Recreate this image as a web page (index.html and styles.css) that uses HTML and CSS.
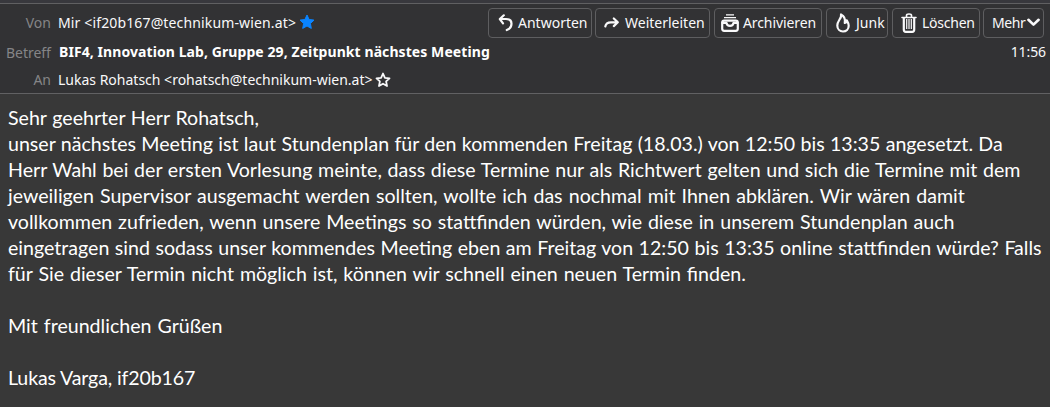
FILE: index.html
```html
<!DOCTYPE html>
<html lang="de">
<head>
<meta charset="utf-8">
<title>Nachricht</title>
<link rel="stylesheet" href="styles.css">
</head>
<body>
<header class="header">
  <div class="top-edge"></div>
  <div class="row row-from">
    <span class="label">Von</span>
    <span class="value from">Mir &lt;if20b167@technikum-wien.at&gt;</span>
    <svg class="star" viewBox="0 0 16 16"><path d="M8 1l2.100 4.500 4.900.6-3.600 3.400.9 4.900L8 12l-4.300 2.400.9-4.900L1 6.100l4.900-.6z" fill="#0a84ff" stroke="#0a84ff" stroke-linejoin="round"/></svg>
    <nav class="actions">
      <button class="btn reply"><svg viewBox="0 0 16 18"><path d="M5.800 1.300L1.800 5L5 9.300M2 5H8C11.500 5 13.500 6.900 13.500 9.700C13.500 12.600 11.800 14.900 8.800 16" class="s"/></svg><span>Antworten</span></button>
      <button class="btn forward"><svg viewBox="0 0 16 18"><path d="M1.300 12.500C1.800 9.500 4 8.300 7 8.300H13.500M9.800 4.500L13.800 8.300L9.800 12.100" class="s"/></svg><span>Weiterleiten</span></button>
      <button class="btn archive"><svg viewBox="0 0 18 18"><path d="M5 .8H13M3 3.600H15" class="thin"/><rect x="1.200" y="6.600" width="15.600" height="10.200" rx="2" class="s"/><path d="M1.500 8.800H5.500C6 12.800 12 12.800 12.500 8.800H16.500" class="s"/></svg><span>Archivieren</span></button>
      <button class="btn junk"><svg viewBox="0 0 14 20"><path d="M5 1.500C6.200 5 1.300 7.500 1.300 12.500C1.300 16 3.800 18.500 7 18.500S12.700 16.200 12.700 12.800C12.700 10.500 11.800 9 10.800 7.300C10.800 8.800 10 9.800 8.800 10C9.500 6.500 8 3 5 1.500Z" class="flame"/><path d="M7 11C6.800 13 4.900 14 4.900 16.200C5.500 17 8.500 17 9.200 16.200C9.200 14 7.200 13.500 7 11Z" fill="#323234"/></svg><span>Junk</span></button>
      <button class="btn delete"><svg viewBox="0 0 16 20"><path d="M1 4.500H15M5.500 4V2.500Q5.500 1 8 1T10.500 2.500V4" class="bin-lid"/><path d="M2.800 5V16.800Q2.800 18.800 4.800 18.800H11.200Q13.200 18.800 13.200 16.800V5" class="s"/><path d="M5.700 6V16M8 6V16M10.300 6V16" class="thin"/></svg><span>Löschen</span></button>
      <button class="btn more"><span>Mehr</span><svg viewBox="0 0 12 8"><path d="M1.300 1.500L6 6L10.700 1.500" class="chev"/></svg></button>
    </nav>
  </div>
  <div class="row row-subject">
    <span class="label">Betreff</span>
    <span class="value subject">BIF4, Innovation Lab, Gruppe 29, Zeitpunkt nächstes Meeting</span>
    <time class="time">11:56</time>
  </div>
  <div class="row row-to">
    <span class="label">An</span>
    <span class="value to">Lukas Rohatsch &lt;rohatsch@technikum-wien.at&gt;</span>
    <svg class="star" viewBox="0 0 16 16"><path d="M8 1.500l1.900 4.300 4.600.5-3.400 3.100.9 4.600L8 11.700l-4 2.300.9-4.600L1.500 6.300l4.600-.5z" class="star-line"/></svg>
  </div>
</header>
<main class="body">
  <div class="line l1">Sehr geehrter Herr Rohatsch,</div>
  <div class="line l2">unser nächstes Meeting ist laut Stundenplan für den kommenden Freitag (18.03.) von 12:50 bis 13:35 angesetzt. Da</div>
  <div class="line l3">Herr Wahl bei der ersten Vorlesung meinte, dass diese Termine nur als Richtwert gelten und sich die Termine mit dem</div>
  <div class="line l4">jeweiligen Supervisor ausgemacht werden sollten, wollte ich das nochmal mit Ihnen abklären. Wir wären damit</div>
  <div class="line l5">vollkommen zufrieden, wenn unsere Meetings so stattfinden würden, wie diese in unserem Stundenplan auch</div>
  <div class="line l6">eingetragen sind sodass unser kommendes Meeting eben am Freitag von 12:50 bis 13:35 online stattfinden würde? Falls</div>
  <div class="line l7">für Sie dieser Termin nicht möglich ist, können wir schnell einen neuen Termin finden.</div>
  <div class="line"></div>
  <div class="line l8">Mit freundlichen Grüßen</div>
  <div class="line"></div>
  <div class="line l9">Lukas Varga, if20b167</div>
</main>
</body>
</html>
```
FILE: styles.css
```css
* { box-sizing: border-box; }
body {
  margin: 0;
  height: 407px;
  overflow: hidden;
  background: #383838;
  color: #f9f9fa;
  font-family: "Noto Sans", sans-serif;
  font-size: 14px;
}
.header {
  height: 94px;
  background: #323234;
  border-bottom: 1px solid #616163;
}
.top-edge { height: 4px; background: #38383d; border-bottom: 1px solid #606062; }
.row { display: flex; align-items: center; white-space: nowrap; }
.row-from { height: 37px; }
.row-subject { height: 22px; }
.row-to { height: 30px; padding-top: 3px; }
.label { width: 51px; margin-right: 7px; text-align: right; color: #858587; }
.from { letter-spacing: 0.14px; }
.subject { margin-left: 1px; padding-bottom: 1px; font-weight: 700; color: #fff; letter-spacing: 0.08px; }
.star { width: 16px; height: 16px; margin-left: 3px; }
.row-from .star { margin-bottom: 2px; }
.actions { display: flex; gap: 4px; margin-left: auto; margin-right: 6px; }
.btn {
  display: flex;
  align-items: center;
  height: 30px;
  padding: 0;
  border: 1px solid #5e5e60;
  border-radius: 4px;
  background: #323234;
  color: #f9f9fa;
  font: inherit;
}
.btn svg { flex: none; width: 16px; height: 18px; }
.reply { width: 104px; padding-left: 9px; gap: 4px; margin-right: -1px; }
.forward { width: 115px; padding-left: 8px; gap: 5px; }
.archive { width: 108px; padding-left: 6px; gap: 4px; letter-spacing: -0.1px; }
.btn.archive svg { width: 18px; }
.junk { width: 62px; padding-left: 9px; gap: 6px; }
.btn.junk svg { width: 14px; height: 20px; }
.delete { width: 88px; padding-left: 8px; gap: 5px; letter-spacing: -0.25px; }
.btn.delete svg { height: 20px; }
.more { width: 61px; padding-left: 8px; gap: 2px; letter-spacing: -0.4px; margin-left: -1px; }
.btn.more svg { width: 13px; height: 9px; }
.s { fill: none; stroke: #f9f9fa; stroke-width: 2.2; stroke-linecap: round; stroke-linejoin: round; }
.flame { fill: none; stroke: #f9f9fa; stroke-width: 2.2; stroke-linejoin: round; }
.thin { fill: none; stroke: #f9f9fa; stroke-width: 1.2; }
.bin-lid { fill: none; stroke: #f9f9fa; stroke-width: 1.6; stroke-linecap: round; }
.star-line { fill: none; stroke: #f9f9fa; stroke-width: 1.8; stroke-linejoin: round; }
.chev { fill: none; stroke: #f9f9fa; stroke-width: 2.4; stroke-linecap: round; stroke-linejoin: round; }
.time { margin-left: auto; margin-right: 4px; padding-bottom: 1px; letter-spacing: -0.1px; }
.body {
  padding: 11px 8px 0;
  font-family: Lato, sans-serif;
  font-size: 19.6px;
  line-height: 26px;
  color: #fff;
}
.line { height: 26px; white-space: nowrap; }
.l1 { word-spacing: 0.7px; }
.l2 { word-spacing: 0.3px; }
.l3 { word-spacing: 0.65px; }
.l4 { word-spacing: 1.1px; }
.l5 { word-spacing: 0.9px; }
.l6 { word-spacing: 0.5px; }
.l7 { word-spacing: 0.9px; }
.l8 { word-spacing: 1px; }
.l9 { letter-spacing: -0.14px; }
```
